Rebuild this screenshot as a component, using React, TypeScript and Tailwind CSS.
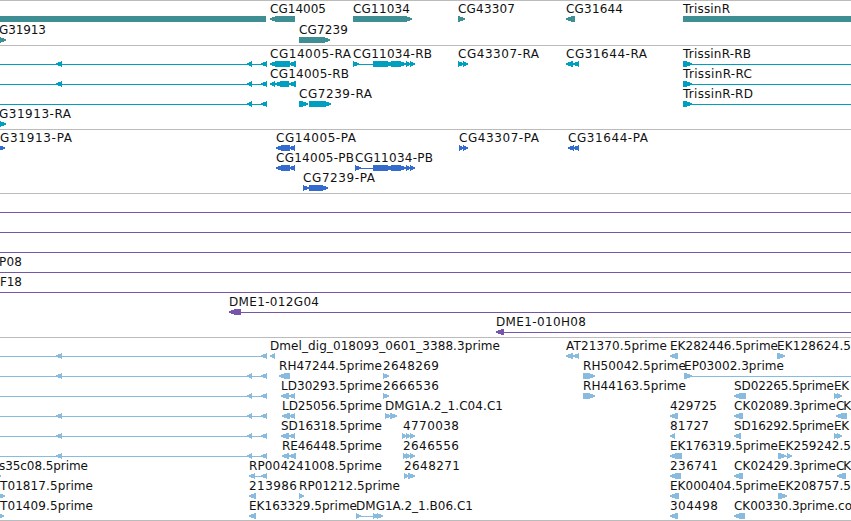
import React from 'react';

// [text, x, width]
type Label = [string, number, number];
// [direction, start, end]
type Glyph = ['l' | 'r' | 'box' | 'line', number, number];

interface Row {
  labels?: Label[];
  glyphs: Glyph[];
}

interface Track {
  name: string;
  color: string;
  className: string;
  rowClass: string;
  rows: Row[];
}

const intron: Glyph[] = [['line', 0, 267], ['l', 247, 252], ['l', 261, 267]];
const intronLong: Glyph[] = [...intron, ['l', 56, 62]];
const cg11034: Glyph[] = [
  ['line', 358, 374],
  ['r', 373, 393],
  ['r', 391, 406],
  ['r', 406, 411],
  ['r', 410, 415],
];
const trissin: Glyph[] = [['r', 683, 692], ['line', 690, 851]];

const tracks: Track[] = [
  {
    name: 'genes',
    color: '#3f8e94',
    className: 'pb-0.5',
    rowClass: 'h-[21px]',
    rows: [
      {
        labels: [['CG14005', 270, 56], ['CG11034', 353, 57], ['CG43307', 458, 57], ['CG31644', 566, 57], ['TrissinR', 683, 47]],
        glyphs: [['box', 0, 266], ['l', 270, 295], ['r', 353, 412], ['r', 458, 465], ['l', 566, 575], ['box', 683, 851]],
      },
      {
        labels: [['G31913', -1, 47], ['CG7239', 299, 49]],
        glyphs: [['r', -1, 6], ['r', 299, 330]],
      },
    ],
  },
  {
    name: 'transcripts',
    color: '#009fbf',
    className: 'pb-[3px]',
    rowClass: 'h-5',
    rows: [
      {
        labels: [['CG14005-RA', 270, 81], ['CG11034-RB', 353, 79], ['CG43307-RA', 458, 81], ['CG31644-RA', 566, 81], ['TrissinR-RB', 683, 68]],
        glyphs: [...intronLong, ['l', 270, 290], ['l', 289, 296], ['r', 353, 359], ...cg11034, ['r', 458, 464], ['r', 463, 468], ['l', 566, 573], ['l', 573, 579], ...trissin],
      },
      {
        labels: [['CG14005-RB', 270, 79], ['TrissinR-RC', 683, 69]],
        glyphs: [...intronLong, ['l', 270, 275], ['l', 275, 289], ['l', 289, 296], ...trissin],
      },
      {
        labels: [['CG7239-RA', 299, 73], ['TrissinR-RD', 683, 70]],
        glyphs: [...intron, ['r', 299, 308], ['r', 309, 331], ...trissin],
      },
      { labels: [['G31913-RA', -1, 72]], glyphs: [['r', -2, 6]] },
    ],
  },
  {
    name: 'proteins',
    color: '#336ccc',
    className: 'pb-[3px]',
    rowClass: 'h-5',
    rows: [
      {
        labels: [['G31913-PA', 0, 72], ['CG14005-PA', 276, 80], ['CG43307-PA', 459, 80], ['CG31644-PA', 568, 80]],
        glyphs: [['r', -1, 5], ['l', 276, 290], ['l', 289, 295], ['r', 459, 464], ['r', 463, 468], ['l', 568, 574], ['l', 573, 579]],
      },
      {
        labels: [['CG14005-PB', 276, 78], ['CG11034-PB', 355, 78]],
        glyphs: [['l', 276, 290], ['l', 289, 295], ['r', 355, 361], ...cg11034],
      },
      { labels: [['CG7239-PA', 303, 72]], glyphs: [['r', 303, 309], ['r', 309, 328]] },
    ],
  },
  {
    name: 'bacs',
    color: '#7755aa',
    className: 'pb-[3px]',
    rowClass: 'h-5',
    rows: [
      { glyphs: [['line', 0, 851]] },
      { glyphs: [['line', 0, 851]] },
      { glyphs: [['line', 0, 851]] },
      { labels: [['P08', -1, 23]], glyphs: [['line', 0, 851]] },
      { labels: [['F18', 0, 22]], glyphs: [['line', 0, 851]] },
      { labels: [['DME1-012G04', 229, 90]], glyphs: [['l', 229, 241], ['line', 240, 851]] },
      { labels: [['DME1-010H08', 496, 90]], glyphs: [['l', 496, 504], ['line', 503, 851]] },
    ],
  },
  {
    name: 'ests',
    color: '#88bbdd',
    className: 'pb-0.5',
    rowClass: 'h-5',
    rows: [
      {
        labels: [['Dmel_dig_018093_0601_3388.3prime', 270, 230], ['AT21370.5prime', 566, 101], ['EK282446.5prime', 670, 108], ['EK128624.5', 777, 74]],
        glyphs: [['line', 0, 267], ['l', 56, 62], ['l', 261, 267], ['l', 270, 275], ['l', 566, 573], ['l', 573, 579], ['l', 670, 678], ['r', 777, 785]],
      },
      {
        labels: [['RH47244.5prime', 279, 103], ['2648269', 383, 56], ['RH50042.5prime', 583, 103], ['EP03002.3prime', 684, 100]],
        glyphs: [...intronLong, ['l', 279, 290], ['r', 383, 389], ['r', 583, 595], ['r', 684, 692], ['line', 690, 851]],
      },
      {
        labels: [['LD30293.5prime', 281, 101], ['2666536', 383, 56], ['RH44163.5prime', 583, 103], ['SD02265.5prime', 734, 100], ['EK', 834, 15]],
        glyphs: [...intron, ['l', 281, 289], ['l', 289, 295], ['r', 383, 389], ['r', 583, 595], ['l', 734, 746], ['r', 834, 839], ['r', 837, 842]],
      },
      {
        labels: [['LD25056.5prime', 282, 100], ['DMG1A.2_1.C04.C1', 385, 118], ['429725', 670, 47], ['CK02089.3prime', 734, 102], ['CK', 836, 15]],
        glyphs: [...intronLong, ['l', 282, 290], ['l', 289, 295], ['r', 385, 391], ['r', 390, 397], ['l', 670, 678], ['l', 734, 743], ['l', 836, 847]],
      },
      {
        labels: [['SD16318.5prime', 281, 101], ['4770038', 403, 56], ['81727', 670, 39], ['SD16292.5prime', 734, 100], ['EK', 834, 15]],
        glyphs: [...intronLong, ['l', 281, 289], ['l', 289, 295], ['r', 402, 407], ['r', 406, 411], ['r', 410, 415], ['l', 670, 675], ['l', 734, 741], ['r', 834, 839], ['r', 837, 842]],
      },
      {
        labels: [['RE46448.5prime', 282, 100], ['2646556', 403, 56], ['EK176319.5prime', 670, 108], ['EK259242.5', 778, 73]],
        glyphs: [...intronLong, ['l', 282, 289], ['l', 289, 296], ['r', 403, 408], ['r', 406, 411], ['r', 410, 415], ['l', 670, 682], ['r', 778, 786], ['line', 785, 788], ['r', 787, 792]],
      },
      {
        labels: [['s35c08.5prime', -1, 89], ['RP004241008.5prime', 249, 133], ['2648271', 404, 56], ['236741', 670, 48], ['CK02429.3prime', 734, 102], ['CK', 836, 15]],
        glyphs: [['r', -4, 1], ['l', 249, 255], ['line', 254, 267], ['l', 261, 267], ['r', 404, 409], ['r', 408, 415], ['l', 670, 681], ['l', 734, 743], ['l', 837, 846]],
      },
      {
        labels: [['T01817.5prime', 0, 93], ['213986', 249, 48], ['RP01212.5prime', 299, 101], ['EK000404.5prime', 670, 108], ['EK208757.5', 778, 73]],
        glyphs: [['r', -2, 5], ['l', 249, 256], ['r', 299, 304], ['l', 670, 679], ['r', 778, 787]],
      },
      {
        labels: [['T01409.5prime', 0, 93], ['EK163329.5prime', 249, 108], ['DMG1A.2_1.B06.C1', 356, 117], ['304498', 670, 48], ['CK00330.3prime.co', 734, 118]],
        glyphs: [['r', -3, 4], ['l', 249, 256], ['r', 356, 361], ['line', 360, 374], ['r', 373, 379], ['r', 377, 383], ['l', 670, 678], ['l', 734, 745]],
      },
    ],
  },
];

const Feature: React.FC<{ glyph: Glyph }> = ({ glyph: [kind, a, b] }) => {
  if (kind === 'line') return <rect x={a} y={18} width={b - a} height={1} />;
  if (kind === 'box') return <rect x={a} y={15} width={b - a} height={6} />;

  // arrow head takes at most 6px, the rest is the body
  const head = Math.min(b - a, 6);
  const points =
    kind === 'l'
      ? `${a},18.5 ${a},17.5 ${a + head},15 ${b},15 ${b},21 ${a + head},21`
      : `${a},15 ${b - head},15 ${b},17.5 ${b},18.5 ${b - head},21 ${a},21`;
  return <polygon points={points} />;
};

const FeatureRow: React.FC<{ row: Row; color: string; className: string }> = ({ row, color, className }) => (
  <div className={className}>
    <svg width="851" height="22" className="block overflow-visible">
      <g fill={color} shapeRendering="crispEdges">
        {row.glyphs.map((glyph, i) => (
          <Feature key={i} glyph={glyph} />
        ))}
      </g>
      {row.labels?.map(([text, x, width]) => (
        <text key={`${text}-${x}`} x={x} y={12} textLength={width} fill="#111">
          {text}
        </text>
      ))}
    </svg>
  </div>
);

export default function App() {
  return (
    <main className="flex h-[521px] w-[851px] flex-col overflow-hidden border-b border-[#bbb] bg-white font-['DejaVu_Sans',sans-serif] text-xs">
      {tracks.map((track) => (
        <section key={track.name} className={`border-t border-[#bbb] ${track.className}`}>
          {track.rows.map((row, i) => (
            <FeatureRow key={i} row={row} color={track.color} className={track.rowClass} />
          ))}
        </section>
      ))}
    </main>
  );
}
